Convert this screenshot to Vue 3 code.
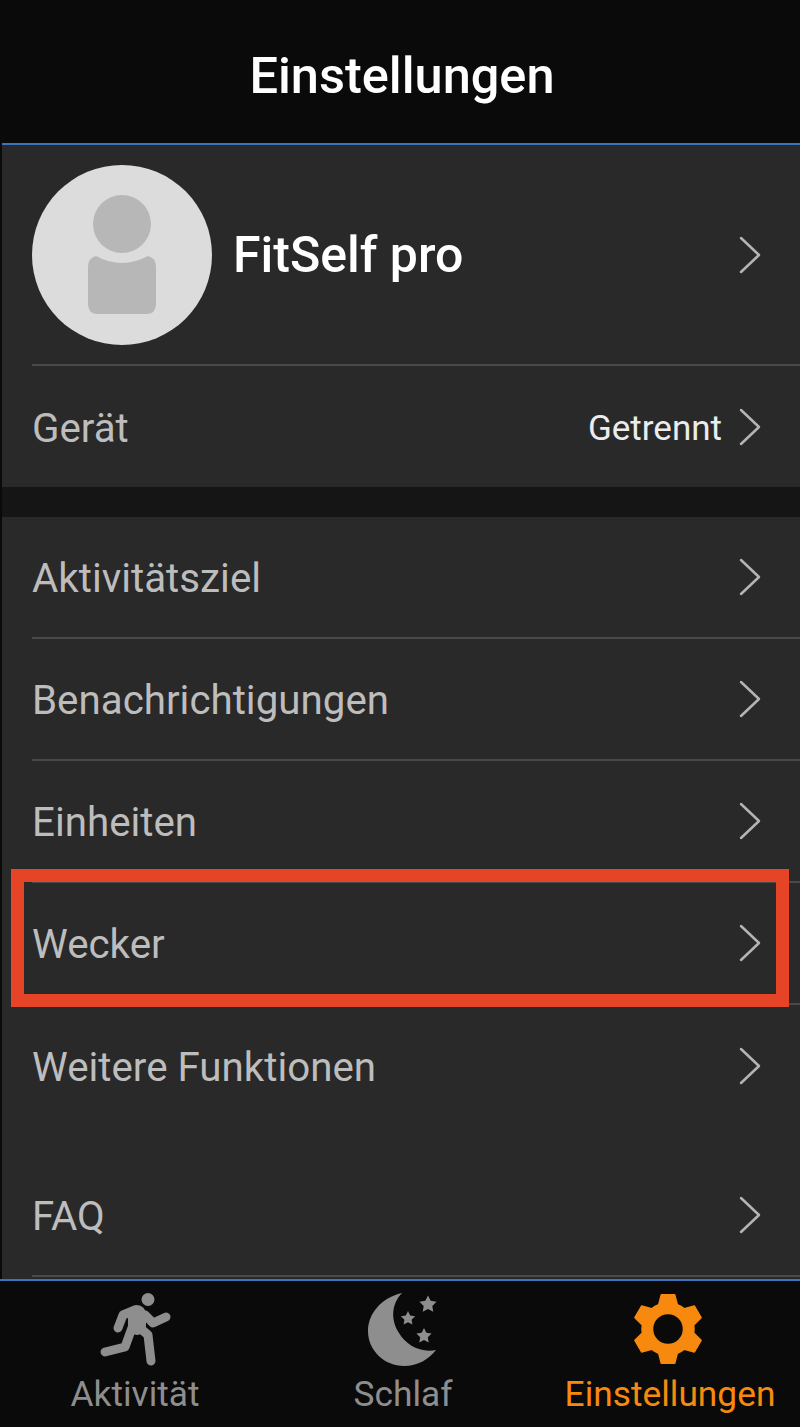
<template>
  <div class="screen">
    <header class="title-bar">Einstellungen</header>

    <main class="content">
      <section class="group">
        <div class="profile">
          <svg class="avatar" viewBox="0 0 180 180">
            <circle cx="90" cy="90" r="90" fill="#dcdcdc" />
            <circle cx="90" cy="59" r="29" fill="#b7b7b7" />
            <path d="M64 91 Q90 105 116 91 Q124 93 124 102 V139 Q124 149 114 149 H66 Q56 149 56 139 V102 Q56 93 64 91 Z" fill="#b7b7b7" />
          </svg>
          <span class="profile-name">FitSelf pro</span>
          <svg class="chevron" viewBox="0 0 24 40"><path d="M3 3 L21 20 L3 37" /></svg>
        </div>
        <div class="row last">
          <span class="label">Gerät</span>
          <span class="value">Getrennt</span>
          <svg class="chevron" viewBox="0 0 24 40"><path d="M3 3 L21 20 L3 37" /></svg>
        </div>
      </section>

      <div class="gap"></div>

      <section class="group">
        <div v-for="item in settings" :key="item" class="row">
          <span class="label">{{ item }}</span>
          <svg class="chevron" viewBox="0 0 24 40"><path d="M3 3 L21 20 L3 37" /></svg>
        </div>
      </section>

      <div class="gap soft"></div>

      <section class="group">
        <div class="row">
          <span class="label">FAQ</span>
          <svg class="chevron" viewBox="0 0 24 40"><path d="M3 3 L21 20 L3 37" /></svg>
        </div>
      </section>

      <div class="highlight"></div>
    </main>

    <nav class="tabs">
      <div class="tab">
        <svg class="tab-icon" viewBox="0 0 90 90">
          <circle cx="58" cy="14.500" r="6.500" fill="#8e8e8e" />
          <g class="runner">
            <path d="M45 25 L33 30 L28 43" />
            <path d="M55 30 L63 38 L76 32" />
            <path d="M50 43 L58 50 L61 76" />
            <path d="M43 40 L35 62 L15 67" />
            <path class="torso" d="M47 29 L47 41" />
          </g>
        </svg>
        <span class="tab-label">Aktivität</span>
      </div>
      <div class="tab">
        <svg class="tab-icon" viewBox="0 0 90 90">
          <path d="M44 8 C22 13 10 30 10 46 C10 66 27 81 46 81 C60 81 71 74 78 65 C62 68 48 60 41 48 C32 34 34 18 44 8 Z" fill="#8e8e8e" />
          <polygon v-for="s in stars" :key="s.cx" :points="starPoints(s)" fill="#8e8e8e" />
        </svg>
        <span class="tab-label">Schlaf</span>
      </div>
      <div class="tab active">
        <svg class="tab-icon" viewBox="0 0 90 90">
          <path :d="gearPath" fill="#f7890f" fill-rule="evenodd" stroke="#f7890f" stroke-width="1.500" stroke-linejoin="round" />
        </svg>
        <span class="tab-label">Einstellungen</span>
      </div>
    </nav>
  </div>
</template>

<script setup>
const settings = ["Aktivitätsziel", "Benachrichtigungen", "Einheiten", "Wecker", "Weitere Funktionen"];

const stars = [
  { cx: 70, cy: 19.500, r: 9 },
  { cx: 50, cy: 33.500, r: 7.500 },
  { cx: 66, cy: 51, r: 8 },
];

const polar = (cx, cy, r, deg) => {
  const a = (deg * Math.PI) / 180;
  return `${(cx + r * Math.cos(a)).toFixed(2)} ${(cy + r * Math.sin(a)).toFixed(2)}`;
};

const starPoints = ({ cx, cy, r }) => {
  const pts = [];
  for (let i = 0; i < 10; i++) {
    pts.push(polar(cx, cy, i % 2 ? r * 0.5 : r, -90 + i * 36).replace(" ", ","));
  }
  return pts.join(" ");
};

const buildGear = () => {
  const cx = 45;
  const cy = 44;
  let d = "";
  for (let i = 0; i < 6; i++) {
    const a = -90 + i * 60;
    d += `${i ? "L" : "M"}${polar(cx, cy, 26, a - 21)} `;
    d += `L${polar(cx, cy, 35, a - 11)} L${polar(cx, cy, 35, a + 11)} L${polar(cx, cy, 26, a + 21)} `;
    d += `A26 26 0 0 1 ${polar(cx, cy, 26, a + 39)} `;
  }
  d += `Z M${cx} ${cy - 15.5} A15.500 15.500 0 1 0 ${cx} ${cy + 15.5} A15.500 15.500 0 1 0 ${cx} ${cy - 15.5} Z`;
  return d;
};

const gearPath = buildGear();
</script>

<style>
html, body {
  margin: 0;
  background: #0a0a0a;
}
</style>

<style scoped>
.screen {
  width: 800px;
  height: 1427px;
  display: flex;
  flex-direction: column;
  background: #0a0a0a;
  font-family: Roboto, "Liberation Sans", sans-serif;
  overflow: hidden;
}

.title-bar {
  height: 143px;
  flex: none;
  display: flex;
  align-items: center;
  justify-content: center;
  box-sizing: border-box;
  padding-top: 8px;
  padding-left: 4px;
  color: #fff;
  font-size: 50.500px;
  font-weight: 500;
}

.content {
  position: relative;
  height: 1134px;
  flex: none;
  margin-left: 2px;
  border-top: 2px solid #3f72bd;
  background: #292929;
}

.profile {
  height: 221px;
  margin-left: 30px;
  padding-right: 38px;
  display: flex;
  align-items: center;
  border-bottom: 2px solid #4a4a4a;
  box-sizing: border-box;
}

.avatar {
  width: 180px;
  height: 180px;
  flex: none;
}

.profile-name {
  margin-left: 21px;
  flex: 1;
  color: #fff;
  font-size: 50px;
  font-weight: 500;
}

.row {
  height: 122px;
  margin-left: 30px;
  padding-right: 38px;
  display: flex;
  align-items: center;
  border-bottom: 2px solid #4a4a4a;
  box-sizing: border-box;
}

.row.last {
  height: 121px;
  border-bottom: 0;
}

.row.last .label,
.row.last .value {
  padding-top: 3px;
}

.group:nth-of-type(2) .row:last-child {
  border-bottom: 0;
}

.label {
  flex: 1;
  padding-top: 2px;
  color: #bdbdbd;
  font-size: 40.300px;
}

.value {
  margin-right: 16px;
  color: #ececec;
  font-size: 35px;
}

.chevron {
  width: 24px;
  height: 40px;
  flex: none;
}

.chevron path {
  fill: none;
  stroke: #b4b4b4;
  stroke-width: 2.500;
  stroke-linecap: round;
  stroke-linejoin: round;
}

.gap {
  height: 30px;
  background: #151515;
}

.gap.soft {
  height: 28px;
  background: #292929;
}

.highlight {
  position: absolute;
  left: 9px;
  top: 724px;
  width: 778px;
  height: 138px;
  box-sizing: border-box;
  border: 13px solid #e64427;
}

.tabs {
  flex: 1;
  display: grid;
  grid-template-columns: 270px 266px 264px;
  border-top: 2px solid #3f72bd;
}

.tab {
  display: flex;
  flex-direction: column;
  align-items: center;
  color: #8e8e8e;
  padding-top: 4px;
}

.tab-icon {
  width: 90px;
  height: 90px;
  flex: none;
}

.tab-label {
  margin-top: -2px;
  font-size: 35.300px;
  white-space: nowrap;
}

.tab.active .tab-label {
  margin-left: 4px;
}

.tab.active {
  color: #f7890f;
}

.runner path {
  fill: none;
  stroke: #8e8e8e;
  stroke-width: 9;
  stroke-linecap: round;
  stroke-linejoin: round;
}

.runner .torso {
  stroke-width: 18;
}
</style>
